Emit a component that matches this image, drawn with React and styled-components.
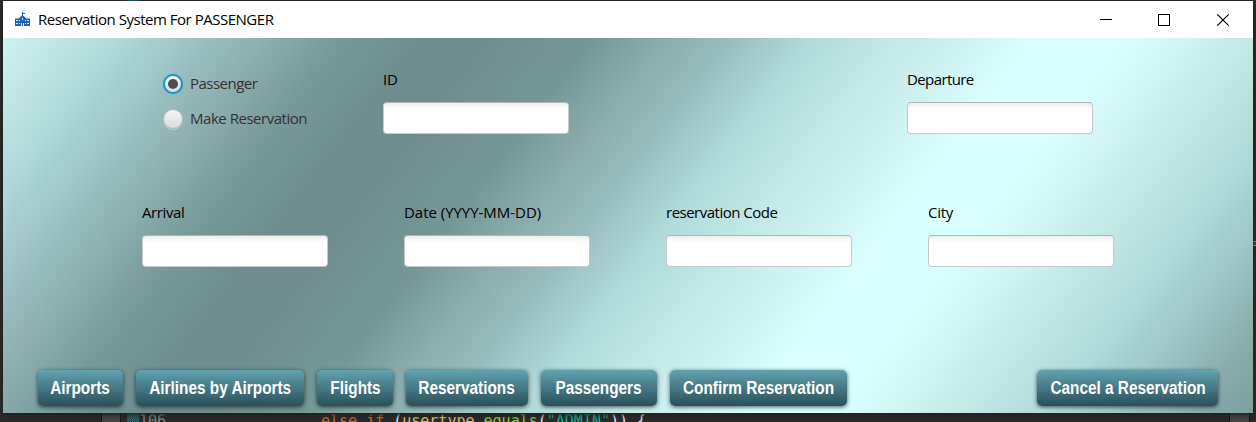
import React from "react";
import styled, { createGlobalStyle } from "styled-components";

const Global = createGlobalStyle`
  * { box-sizing: border-box; }
  body { margin: 0; background: #2a2a2a; font-family: "Open Sans", "Noto Sans", sans-serif; overflow: hidden; }
`;

const Desktop = styled.div`
  position: relative;
  width: 1256px;
  height: 422px;
  padding: 1px 3px 0;
  background: #2a2a2a;
  overflow: hidden;
`;

const Window = styled.main`
  position: relative;
  display: flex;
  flex-direction: column;
  width: 1250px;
  height: 412px;
  box-shadow: 0 2px 5px #1f1f1f;
`;

const TitleBar = styled.header`
  display: flex;
  align-items: center;
  height: 37px;
  flex: none;
  padding: 0 24px 0 11px;
  background: #fff;
`;

const Title = styled.h1`
  flex: 1;
  margin: 0 0 2px 7px;
  font-size: 15px;
  line-height: 20px;
  font-weight: 400;
  letter-spacing: ${(p) => p.$track}px;
  color: #000;
  white-space: nowrap;
`;

const Controls = styled.div`
  display: flex;
  gap: 46px;
  svg { display: block; }
`;

const Content = styled.section`
  display: flex;
  flex-direction: column;
  height: 375px;
  padding: 29px 35px 0;
  background: linear-gradient(
    127.6deg,
    #cdf4f2 0px,
    #c3e9e7 34px,
    #b0d9d9 91px,
    #98bcbd 169px,
    #8bacac 214px,
    #769a99 269px,
    #6f8d8e 331px,
    #6f8d8e 385px,
    #759896 467px,
    #8bacac 525px,
    #98bcbd 576px,
    #b0d9d9 639px,
    #c3e9e7 709px,
    #d0f4f3 772px,
    #d9ffff 822px,
    #d9ffff 882px,
    #d0f5f3 937px,
    #c3e9e7 988px,
    #b0d9d9 1059px,
    #98bcbd 1134px,
    #8bacad 1168px,
    #7a9d9d 1224px
  );
`;

const Row = styled.div`
  display: flex;
  height: 133px;
  padding-left: ${(p) => p.$indent}px;
`;

const Choices = styled.div`
  display: flex;
  flex-direction: column;
  gap: 15px;
  width: 220px;
  padding-top: 6px;
`;

const Choice = styled.label`
  display: flex;
  align-items: center;
  gap: 7px;
  height: 20px;
  font-size: 15px;
  line-height: 20px;
  letter-spacing: ${(p) => p.$track}px;
  color: #333;
  white-space: nowrap;
`;

const Radio = styled.span`
  display: grid;
  place-items: center;
  flex: none;
  width: 20px;
  height: 20px;
  margin-top: 2px;
  border-radius: 50%;
  border: ${(p) => (p.$on ? "2px solid #129bca" : "1px solid #b4b8b8")};
  background: linear-gradient(#f4f4f4, #dcdcdc);
  box-shadow: ${(p) => (p.$on ? "0 0 1px #129bca" : "0 1px 0 #c6d4d4")};
  &::after {
    content: "";
    width: 10px;
    height: 10px;
    border-radius: 50%;
    background: ${(p) => (p.$on ? "#505050" : "transparent")};
  }
`;

const Field = styled.label`
  display: flex;
  flex-direction: column;
  gap: 11px;
  width: 186px;
  padding-top: 1px;
  margin-right: ${(p) => p.$after ?? 76}px;
  flex: none;
`;

const FieldLabel = styled.span`
  font-size: 15px;
  line-height: 23px;
  height: 23px;
  letter-spacing: ${(p) => p.$track}px;
  color: #000;
  white-space: nowrap;
`;

const Input = styled.input`
  width: 186px;
  height: 32px;
  border: 1px solid #c8c8c8;
  border-top-color: #b5b5b5;
  border-radius: 4px;
  outline: none;
  background: linear-gradient(#eee, #fff 6px);
`;

const Actions = styled.nav`
  display: flex;
  gap: 13px;
  margin-top: 37px;
`;

const ActionButton = styled.button`
  width: ${(p) => p.$w}px;
  height: 36px;
  padding: 0;
  margin-left: ${(p) => (p.$end ? "auto" : 0)};
  border: 0;
  border-radius: 5px;
  background: linear-gradient(#61a2b1, #2a5058);
  box-shadow: 0 1px 4px rgba(0, 0, 0, 0.65);
  color: #fff;
  font: bold 18px/36px "Liberation Sans", sans-serif;
  white-space: nowrap;
`;

const Condensed = styled.span`
  display: inline-block;
  transform: scaleX(0.853);
`;

const CodeLine = styled.pre`
  position: absolute;
  left: 101px;
  top: 411px;
  display: flex;
  width: 1152px;
  height: 20px;
  margin: 0;
  font: 15px/20px "DejaVu Sans Mono", monospace;
  color: #c9c9c9;
`;

const Gutter = styled.span`
  width: 20px;
  border: solid #161616;
  border-width: 0 1px;
  background: #444;
`;
const Marker = styled.span`
  width: 12px;
  margin-left: 6px;
  background: repeating-conic-gradient(#157b9c 0 25%, #24414c 0 50%) 0 0 / 2px 2px;
`;
const LineNumber = styled.span`
  width: 182px;
  color: #7b8388;
`;
const Token = styled.span`
  color: ${(p) => p.$c};
`;
const Scroll = styled.span`
  width: 21px;
  margin-left: auto;
  margin-right: 3px;
  border: solid #161616;
  border-width: 0 1px;
  background: #444;
`;
const RulerMark = styled.i`
  position: absolute;
  left: 1253px;
  top: 241px;
  width: 3px;
  height: 5px;
  border: solid #a99238;
  border-width: 1px 0;
  background: #4b452b;
`;
const TopTrace = styled.i`
  position: absolute;
  left: 127px;
  top: 0;
  width: 12px;
  height: 1px;
  background: #1d5568;
`;

const TitleIcon = () => (
  <svg width="17" height="16" viewBox="0 0 17 16">
    <path d="M8.5 0v5M8.5 1.5h2.5" stroke="#27619c" fill="none" />
    <path d="M1 6.5h3.5l4-3.5 4 3.5H16V14H1z" fill="#1b66b1" />
    <path d="M2 8h2v1H2zm0 3h2v1H2zm3-3h1v1H5zm0 3h1v1H5zm6-3h1v1h-1zm0 3h1v1h-1zm2-3h2v1h-2zm0 3h2v1h-2zM8 6h1v2H8zM7 11h1v3H7zm2 0h1v3H9z" fill="#d9eafa" />
  </svg>
);

const TextField = ({ label, track, after }) => (
  <Field $after={after}>
    <FieldLabel $track={track}>{label}</FieldLabel>
    <Input />
  </Field>
);

const Action = ({ width, end, children }) => (
  <ActionButton $w={width} $end={end}>
    <Condensed>{children}</Condensed>
  </ActionButton>
);

export default function App() {
  return (
    <Desktop>
      <Global />
      <CodeLine>
        <Gutter />
        <Marker />
        <LineNumber>106</LineNumber>
        <Token $c="#cc6c1d">else if </Token>
        <Token $c="#e6e6fa">(</Token>
        <Token $c="#d9c65c">usertype</Token>
        <Token $c="#e6e6fa">.</Token>
        <Token $c="#96c832">equals</Token>
        <Token $c="#e6e6fa">(</Token>
        <Token $c="#17b294">"ADMIN"</Token>
        <Token $c="#e6e6fa">)) {"{"}</Token>
        <Scroll />
      </CodeLine>
      <TopTrace />
      <RulerMark />
      <Window>
        <TitleBar>
          <TitleIcon />
          <Title $track={-0.48}>Reservation System For PASSENGER</Title>
          <Controls>
            <svg width="12" height="12" shapeRendering="crispEdges"><path d="M0 5.5h12" stroke="#000" /></svg>
            <svg width="12" height="12" shapeRendering="crispEdges"><path d="M.5.5h11v11H.5z" stroke="#000" fill="none" /></svg>
            <svg width="13" height="12"><path d="M1.3.3l11.4 11.4M12.7.3L1.3 11.7" stroke="#000" strokeWidth="1.1" /></svg>
          </Controls>
        </TitleBar>
        <Content>
          <Row $indent={125}>
            <Choices>
              <Choice $track={-0.52}><Radio $on />Passenger</Choice>
              <Choice $track={-0.47}><Radio />Make Reservation</Choice>
            </Choices>
            <TextField label="ID" track={-0.3} after={338} />
            <TextField label="Departure" track={-0.6} />
          </Row>
          <Row $indent={104}>
            <TextField label="Arrival" track={-0.4} />
            <TextField label="Date (YYYY-MM-DD)" track={-0.03} />
            <TextField label="reservation Code" track={-0.5} />
            <TextField label="City" track={-0.3} after={0} />
          </Row>
          <Actions>
            <Action width={85}>Airports</Action>
            <Action width={168}>Airlines by Airports</Action>
            <Action width={76}>Flights</Action>
            <Action width={122}>Reservations</Action>
            <Action width={116}>Passengers</Action>
            <Action width={177}>Confirm Reservation</Action>
            <Action width={181} end>Cancel a Reservation</Action>
          </Actions>
        </Content>
      </Window>
    </Desktop>
  );
}
